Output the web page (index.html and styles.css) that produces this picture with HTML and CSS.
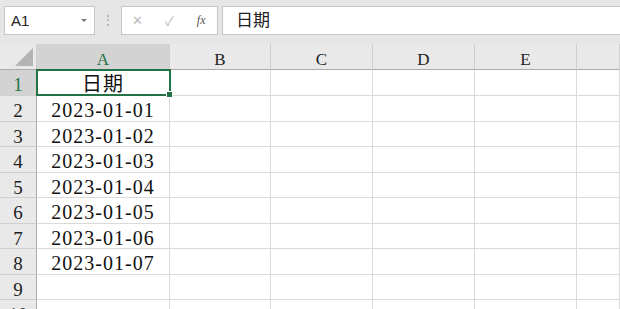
FILE: index.html
```html
<!DOCTYPE html>
<html lang="zh-CN">

<head>
  <meta charset="UTF-8">
  <title>Book1 - Sheet1</title>
  <link rel="stylesheet" href="styles.css">
</head>

<body>
  <div class="formula-bar">
    <div class="name-box">
      <span>A1</span>
      <span class="name-arrow"></span>
    </div>
    <div class="grip">⋮</div>
    <div class="fx-box">
      <span class="fx-btn muted">✕</span>
      <span class="fx-btn muted">✓</span>
      <span class="fx-btn fx">fx</span>
    </div>
    <div class="formula-input">日期</div>
  </div>

  <div class="sheet">
    <div class="corner"><span class="corner-tri"></span></div>
    <div class="col-head active">A</div>
    <div class="col-head">B</div>
    <div class="col-head">C</div>
    <div class="col-head">D</div>
    <div class="col-head">E</div>
    <div class="col-head"></div>

    <div class="row-head active">1</div>
    <div class="cell">日期</div>
    <div class="cell"></div><div class="cell"></div><div class="cell"></div><div class="cell"></div><div class="cell"></div>

    <div class="row-head">2</div>
    <div class="cell">2023-01-01</div>
    <div class="cell"></div><div class="cell"></div><div class="cell"></div><div class="cell"></div><div class="cell"></div>

    <div class="row-head">3</div>
    <div class="cell">2023-01-02</div>
    <div class="cell"></div><div class="cell"></div><div class="cell"></div><div class="cell"></div><div class="cell"></div>

    <div class="row-head">4</div>
    <div class="cell">2023-01-03</div>
    <div class="cell"></div><div class="cell"></div><div class="cell"></div><div class="cell"></div><div class="cell"></div>

    <div class="row-head">5</div>
    <div class="cell">2023-01-04</div>
    <div class="cell"></div><div class="cell"></div><div class="cell"></div><div class="cell"></div><div class="cell"></div>

    <div class="row-head">6</div>
    <div class="cell">2023-01-05</div>
    <div class="cell"></div><div class="cell"></div><div class="cell"></div><div class="cell"></div><div class="cell"></div>

    <div class="row-head">7</div>
    <div class="cell">2023-01-06</div>
    <div class="cell"></div><div class="cell"></div><div class="cell"></div><div class="cell"></div><div class="cell"></div>

    <div class="row-head">8</div>
    <div class="cell">2023-01-07</div>
    <div class="cell"></div><div class="cell"></div><div class="cell"></div><div class="cell"></div><div class="cell"></div>

    <div class="row-head">9</div>
    <div class="cell"></div>
    <div class="cell"></div><div class="cell"></div><div class="cell"></div><div class="cell"></div><div class="cell"></div>

    <div class="row-head">10</div>
    <div class="cell"></div>
    <div class="cell"></div><div class="cell"></div><div class="cell"></div><div class="cell"></div><div class="cell"></div>

    <!-- active cell outline over A1 -->
    <div class="selection"><span class="fill-handle"></span></div>
  </div>
</body>

</html>
```

FILE: styles.css
```css
body {
  margin: 0;
  width: 620px;
  height: 309px;
  overflow: hidden;
  background: #fff;
  font-family: "Liberation Serif", "Noto Sans CJK SC", serif;
}

/* formula bar */
.formula-bar {
  display: flex;
  align-items: flex-start;
  height: 44px;
  padding-top: 6px;
  box-sizing: border-box;
  background: #e6e6e6;
  font-family: "Liberation Sans", "Noto Sans CJK SC", sans-serif;
}

.name-box {
  display: flex;
  align-items: center;
  justify-content: space-between;
  width: 91px;
  height: 29px;
  margin-left: 4px;
  padding: 0 6px 0 6px;
  box-sizing: border-box;
  background: #fff;
  border: 1px solid #c6c6c6;
  font-size: 15px;
  color: #222;
}

.name-arrow {
  width: 0;
  height: 0;
  border-left: 3px solid transparent;
  border-right: 3px solid transparent;
  border-top: 3px solid #777;
  margin-right: 1px;
}

.grip {
  width: 26px;
  height: 29px;
  line-height: 29px;
  text-align: center;
  color: #a8a8a8;
  font-size: 14px;
}

.fx-box {
  display: flex;
  align-items: center;
  width: 97px;
  height: 29px;
  box-sizing: border-box;
  background: #fff;
  border: 1px solid #c6c6c6;
}

.fx-btn {
  width: 32px;
  text-align: center;
  font-size: 13px;
}

.fx-btn.muted {
  color: #bcbcbc;
}

.fx {
  font-family: "Liberation Serif", serif;
  font-style: italic;
  font-size: 12px;
  color: #555;
}

.formula-input {
  flex: 1;
  height: 29px;
  line-height: 27px;
  margin-left: 4px;
  padding-left: 13px;
  box-sizing: border-box;
  background: #fff;
  border: 1px solid #c6c6c6;
  border-right: none;
  font-size: 17px;
  color: #222;
}

/* grid */
.sheet {
  position: relative;
  display: grid;
  grid-template-columns: 37px 133px 101px 102px 102px 102px 1fr;
  grid-template-rows: 26px 26px 26px 25px 26px 25px 26px 25px 26px 25px 26px;
}

.sheet > div {
  box-sizing: border-box;
}

.corner,
.col-head,
.row-head {
  background: #e9e9e9;
  color: #222;
  border-right: 1px solid #cfcfcf;
  border-bottom: 1px solid #ababab;
}

.corner {
  position: relative;
}

.corner-tri {
  position: absolute;
  right: 3px;
  bottom: 3px;
  width: 0;
  height: 0;
  border-left: 18px solid transparent;
  border-bottom: 18px solid #b4b4b4;
}

.col-head {
  padding-top: 3px;
  text-align: center;
  font-size: 17px;
  line-height: 26px;
}

.row-head {
  padding-top: 2px;
  text-align: center;
  font-size: 19px;
  line-height: 25px;
  border-bottom-color: #d0d0d0;
  border-right-color: #ababab;
}

.col-head.active,
.row-head.active {
  background: #d3d3d3;
  color: #217346;
}

.cell {
  padding-top: 2px;
  border-right: 1px solid #dadada;
  border-bottom: 1px solid #dadada;
  text-align: center;
  font-size: 20px;
  line-height: 25px;
  letter-spacing: 1px;
  color: #111;
  white-space: nowrap;
}

.selection {
  position: absolute;
  left: 36px;
  top: 25px;
  width: 135px;
  height: 27px;
  box-sizing: border-box;
  border: 2px solid #217346;
}

.fill-handle {
  position: absolute;
  right: -4px;
  bottom: -4px;
  width: 5px;
  height: 5px;
  background: #217346;
  border: 1px solid #fff;
}
```
